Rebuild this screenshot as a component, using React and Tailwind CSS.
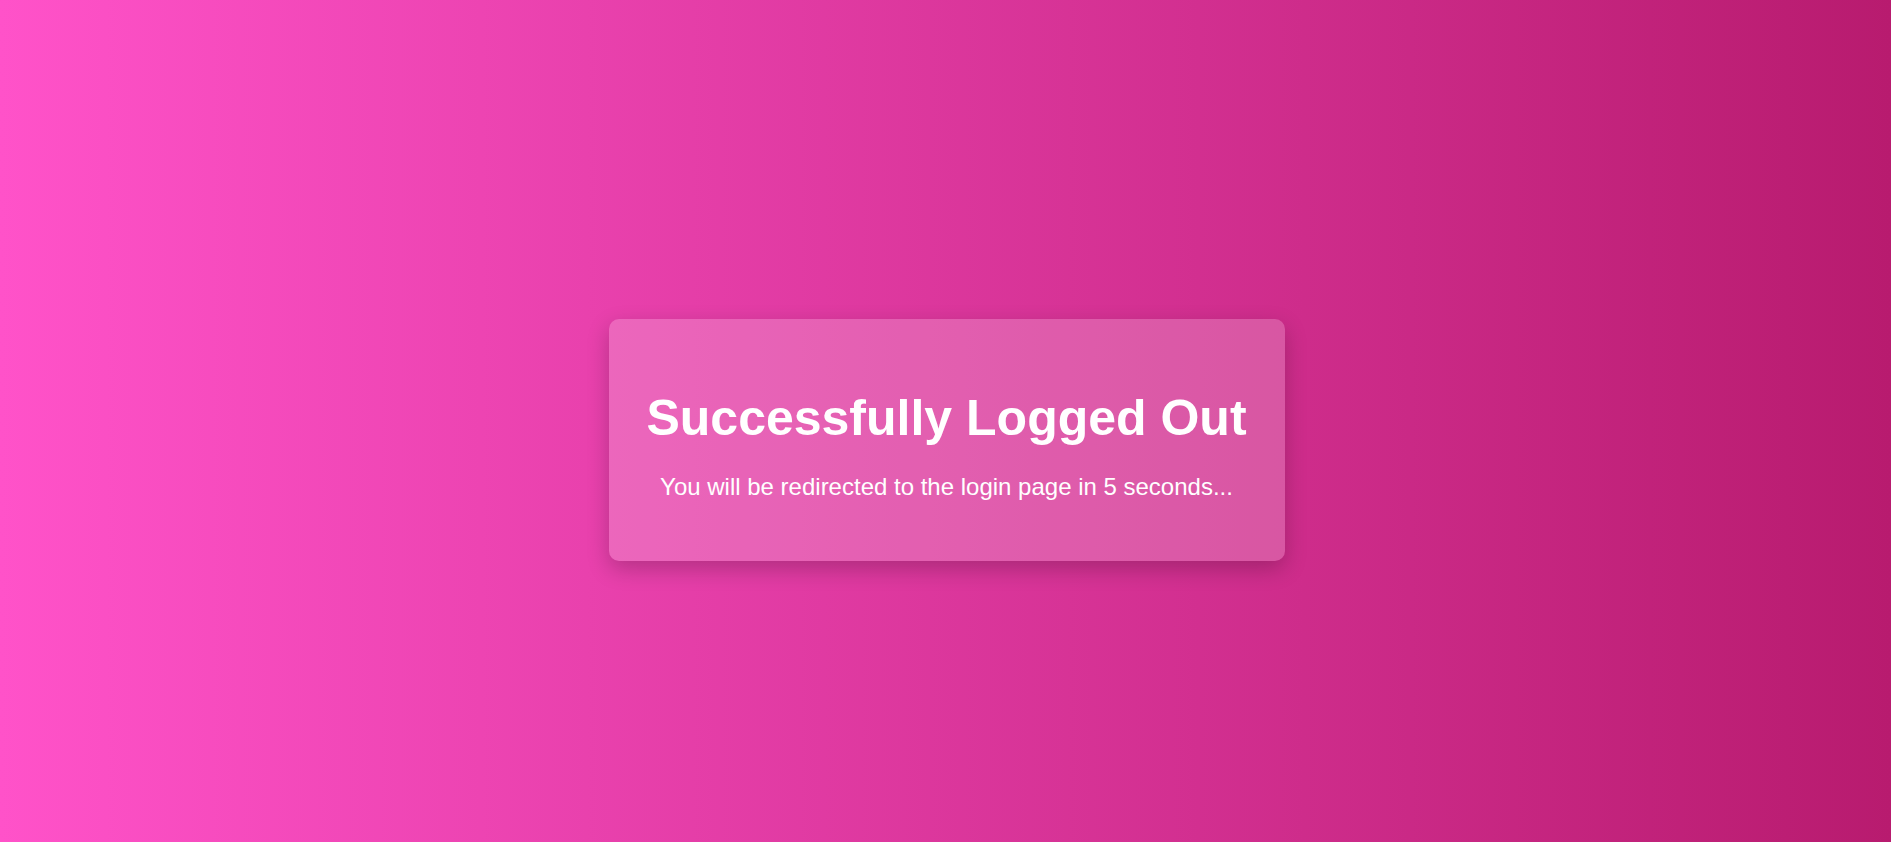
export default function App() {
  return (
    <div
      className="min-h-screen w-full flex items-center justify-center pt-[38px] pl-[2px] bg-[linear-gradient(to_right,#ff52c9,#b81b6f)]"
      style={{ fontFamily: '"Liberation Sans", Arial, sans-serif' }}
    >
      {/* Logout notice */}
      <div className="w-[676px] h-[242px] rounded-[10px] bg-white/20 shadow-[0_8px_22px_rgba(0,0,0,0.22)] flex flex-col items-center pt-[71px] text-white text-center">
        <h1 className="text-[50px] leading-[57px] font-bold">Successfully Logged Out</h1>
        <p className="mt-[26px] text-[24px] leading-[27px]">
          You will be redirected to the login page in 5 seconds...
        </p>
      </div>
    </div>
  )
}
